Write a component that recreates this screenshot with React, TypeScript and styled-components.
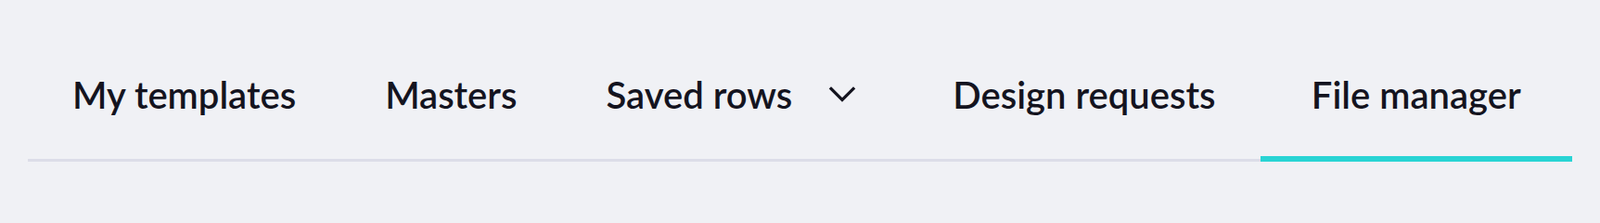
import React from 'react';
import styled, { createGlobalStyle } from 'styled-components';

interface TabItem {
    label: string;
    dropdown?: boolean;
}

const tabs: TabItem[] = [
    { label: 'My templates' },
    { label: 'Masters' },
    { label: 'Saved rows', dropdown: true },
    { label: 'Design requests' },
    { label: 'File manager' },
];

const GlobalStyle = createGlobalStyle`
    html, body {
        margin: 0;
        background: #f0f1f5;
    }
    body {
        font-family: Lato, "Open Sans", sans-serif;
        color: #14141f;
    }
`;

const Page = styled.div`
    padding: 78px 30px 0;
    height: 204px;
    box-sizing: border-box;
`;

const TabList = styled.nav`
    display: flex;
    align-items: stretch;
    border-bottom: 3px solid #dcdde8;
`;

const Tab = styled.div<{ $active?: boolean }>`
    display: flex;
    align-items: center;
    justify-content: center;
    padding: 0 48px 42px;
    margin-bottom: -3px;
    border-bottom: 6px solid ${(p) => (p.$active ? '#29d4d4' : 'transparent')};
    cursor: pointer;

    &:last-child {
        flex: 1;
    }
`;

const Label = styled.span`
    font-size: 40px;
    font-weight: 600;
    line-height: 48px;
    white-space: nowrap;
`;

const Chevron = styled.svg`
    width: 32px;
    height: 32px;
    margin: 0 7px 0 38px;
    flex-shrink: 0;
`;

export default function App() {
    const active = 'File manager';
    return (
        <>
            <GlobalStyle />
            <Page>
                <TabList>
                    {tabs.map((t) => (
                        <Tab key={t.label} $active={t.label === active}>
                            <Label>{t.label}</Label>
                            {t.dropdown ? (
                                <Chevron viewBox="0 0 32 32" fill="none">
                                    <path
                                        d="M4 9.5 L16 21.5 L28 9.5"
                                        stroke="#14141f"
                                        strokeWidth="3.2"
                                        strokeLinecap="square"
                                    />
                                </Chevron>
                            ) : null}
                        </Tab>
                    ))}
                </TabList>
            </Page>
        </>
    );
}
